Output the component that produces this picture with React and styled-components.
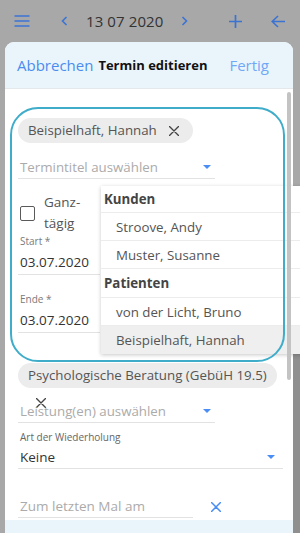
import React from 'react';
import styled, { createGlobalStyle } from 'styled-components';

const GlobalStyle = createGlobalStyle`
  html, body {
    margin: 0;
    height: 533px;
    overflow: hidden;
  }
  body {
    background:
      linear-gradient(#8f8f8f, #8f8f8f) right 353px / 7px 180px no-repeat,
      #a8a8a8;
    font-family: "Open Sans", "Liberation Sans", sans-serif;
  }
  * {
    box-sizing: border-box;
  }
`;

const BLUE = '#3b73d3';
const LINK = '#4b8cef';
const TEXT = 13.3;

const TopBar = styled.div`
  height: 42px;
  display: flex;
  align-items: center;
  padding: 0 15px 0 14px;
  color: ${BLUE};
`;

const IconButton = styled.span`
  display: flex;
  align-items: center;
  justify-content: center;
`;

const DateNav = styled.div`
  display: flex;
  align-items: center;
  margin-left: 31px;
  gap: 18px;
`;

const DateText = styled.span`
  font-size: 15px;
  color: #333;
  letter-spacing: 0.1px;
`;

const Actions = styled.div`
  display: flex;
  align-items: center;
  margin-left: auto;
  gap: 29px;
`;

const Modal = styled.div`
  position: relative;
  margin-left: 5px;
  width: 288px;
  height: 491px;
  background: #fff;
  border-radius: 9px 9px 0 0;
  display: flex;
  flex-direction: column;
`;

const ModalHeader = styled.div`
  height: 47px;
  flex-shrink: 0;
  display: flex;
  align-items: center;
  padding: 0 24px 0 12px;
  background: #eaf5fb;
  border-bottom: 1px solid #e4e8ea;
  border-radius: 9px 9px 0 0;
`;

const HeaderLink = styled.span`
  font-size: 15px;
  color: ${p => (p.$light ? '#70a7f6' : LINK)};
  margin-left: ${p => (p.$light ? 'auto' : '0')};
`;

const Title = styled.span`
  font-size: 13px;
  font-weight: 700;
  color: #111;
  margin-left: 5px;
`;

const ModalBody = styled.div`
  position: relative;
  flex: 1;
  padding: 18px 8px 0 5px;
`;

const Scrollbar = styled.div`
  position: absolute;
  right: 2px;
  top: 3px;
  width: 4px;
  height: 288px;
  border-radius: 2px;
  background: #c3c3c3;
  z-index: 5;
`;

const FocusGroup = styled.div`
  position: relative;
  width: 275px;
  height: 255px;
  padding: 11px 8px 0 8px;

  &::after {
    content: '';
    position: absolute;
    inset: 0;
    border: 2px solid #3fadca;
    border-radius: 28px;
    pointer-events: none;
    z-index: 3;
  }
`;

const Chip = styled.div`
  display: inline-flex;
  flex-wrap: wrap;
  align-items: center;
  height: 25px;
  padding: 0 10px;
  border-radius: 13px;
  background: #ececec;
  font-size: ${TEXT}px;
  color: #555;
  width: ${p => p.$width}px;
  margin-top: ${p => p.$mt || 0}px;
`;

const ChipLabel = styled.span`
  line-height: 25px;
  white-space: nowrap;
`;

const ChipClose = styled.span`
  display: flex;
  margin-left: ${p => p.$ml}px;
  margin-top: ${p => p.$mt || 0}px;
`;

const SelectField = styled.div`
  display: flex;
  align-items: center;
  width: ${p => p.$width}px;
  height: 23px;
  margin-top: ${p => p.$mt}px;
  padding: 0 4px 0 2px;
  border-bottom: 1px solid #e2e2e2;
  font-size: ${p => p.$size || TEXT}px;
  color: ${p => (p.$placeholder ? '#ababab' : '#333')};
`;

const FieldText = styled.span`
  flex: 1;
  white-space: nowrap;
`;

const Caret = styled.span`
  width: 0;
  height: 0;
  border-left: 4px solid transparent;
  border-right: 4px solid transparent;
  border-top: 4px solid #4a8ef5;
  margin-right: ${p => p.$mr || 0}px;
`;

const CheckRow = styled.div`
  display: flex;
  align-items: center;
  margin-top: 13px;
  padding-left: 2px;
`;

const CheckBox = styled.span`
  width: 15px;
  height: 15px;
  border: 1.5px solid #5a5a5a;
  border-radius: 2px;
  flex-shrink: 0;
`;

const CheckLabel = styled.span`
  width: 44px;
  margin-left: 9px;
  font-size: 13.5px;
  line-height: 21px;
  color: #555;
  hyphens: manual;
`;

const SmallLabel = styled.div`
  font-size: 10px;
  line-height: 14px;
  color: ${p => p.$color || '#7a7a7a'};
  padding-left: 2px;
  margin-top: ${p => p.$mt || 0}px;
`;

const DateValue = styled.div`
  width: 82px;
  height: 25px;
  margin-top: 2px;
  padding-left: 2px;
  font-size: 13.5px;
  line-height: 24px;
  color: #333;
  border-bottom: 1px solid #e2e2e2;
`;

const Popup = styled.div`
  position: absolute;
  left: 91px;
  top: 79px;
  width: 205px;
  background: #fff;
  box-shadow: 0 1px 4px rgba(0, 0, 0, 0.22);
  z-index: 2;
`;

const GroupHeader = styled.div`
  height: ${p => p.$h || 28}px;
  padding-left: 3px;
  display: flex;
  align-items: center;
  font-size: ${TEXT}px;
  font-weight: 700;
  color: #444;
  border-bottom: 1px solid #ececec;
`;

const Option = styled.div`
  height: 28px;
  padding-left: 15px;
  display: flex;
  align-items: center;
  font-size: ${TEXT}px;
  color: #555;
  background: ${p => (p.$active ? '#efefef' : '#fff')};
  border-bottom: ${p => (p.$last ? 'none' : '1px solid #ececec')};
`;

const Section = styled.div`
  padding-left: 8px;
  display: flex;
  flex-direction: column;
  align-items: flex-start;
`;

const ClearRow = styled.div`
  display: flex;
  align-items: center;
  margin-top: 26px;
`;

const ClearIcon = styled.span`
  display: flex;
  margin-left: 18px;
`;

const ModalFooter = styled.div`
  height: 13px;
  flex-shrink: 0;
  background: #eaf5fb;
`;

const XIcon = ({ size = 10, color = '#444', width = 1.4 }) => (
  <svg width={size} height={size} viewBox="0 0 10 10">
    <path d="M0.5 0.5 L9.5 9.5 M9.5 0.5 L0.5 9.5" stroke={color} strokeWidth={width} strokeLinecap="round" />
  </svg>
);

export default function App() {
  return (
    <>
      <GlobalStyle />
      <TopBar>
        <IconButton>
          <svg width="16" height="12" viewBox="0 0 16 12">
            <path d="M0.5 1 H15.5 M0.5 6 H15.5 M0.5 11 H15.5" stroke={BLUE} strokeWidth="1.6" />
          </svg>
        </IconButton>
        <DateNav>
          <svg width="7" height="10" viewBox="0 0 7 10">
            <path d="M5.5 1 L1.5 5 L5.5 9" stroke={BLUE} strokeWidth="1.6" fill="none" />
          </svg>
          <DateText>13 07 2020</DateText>
          <svg width="7" height="10" viewBox="0 0 7 10">
            <path d="M1.5 1 L5.5 5 L1.5 9" stroke={BLUE} strokeWidth="1.6" fill="none" />
          </svg>
        </DateNav>
        <Actions>
          <svg width="13" height="13" viewBox="0 0 13 13">
            <path d="M6.5 0 V13 M0 6.5 H13" stroke={BLUE} strokeWidth="1.7" />
          </svg>
          <svg width="14" height="13" viewBox="0 0 14 13">
            <path d="M14 6.5 H1.5 M7 1 L1.2 6.5 L7 12" stroke={BLUE} strokeWidth="1.6" fill="none" />
          </svg>
        </Actions>
      </TopBar>

      <Modal>
        <ModalHeader>
          <HeaderLink>Abbrechen</HeaderLink>
          <Title>Termin editieren</Title>
          <HeaderLink $light>Fertig</HeaderLink>
        </ModalHeader>

        <ModalBody>
          <Scrollbar />
          <FocusGroup>
            <Chip $width={175}>
              <ChipLabel>Beispielhaft, Hannah</ChipLabel>
              <ChipClose $ml={12}>
                <XIcon size={10} />
              </ChipClose>
            </Chip>
            <SelectField $width={197} $mt={13} $placeholder>
              <FieldText>Termintitel auswählen</FieldText>
              <Caret />
            </SelectField>

            <CheckRow>
              <CheckBox />
              <CheckLabel>Ganz{'\u00AD'}tägig</CheckLabel>
            </CheckRow>
            <SmallLabel>Start *</SmallLabel>
            <DateValue>03.07.2020</DateValue>
            <SmallLabel $mt={17}>Ende *</SmallLabel>
            <DateValue>03.07.2020</DateValue>

            <Popup>
              <GroupHeader $h={27}>Kunden</GroupHeader>
              <Option>Stroove, Andy</Option>
              <Option>Muster, Susanne</Option>
              <GroupHeader $h={29}>Patienten</GroupHeader>
              <Option>von der Licht, Bruno</Option>
              <Option $active $last>Beispielhaft, Hannah</Option>
            </Popup>
          </FocusGroup>

          <Section>
            <Chip $width={259} $mt={1}>
              <ChipLabel>Psychologische Beratung (GebüH 19.5)</ChipLabel>
              <ChipClose $ml={8} $mt={10}>
                <XIcon size={10} />
              </ChipClose>
            </Chip>
            <SelectField $width={197} $mt={12} $placeholder>
              <FieldText>Leistung(en) auswählen</FieldText>
              <Caret />
            </SelectField>
            <SmallLabel $mt={7} $color="#666">Art der Wiederholung</SmallLabel>
            <SelectField $width={265} $mt={2} $size={13.5}>
              <FieldText>Keine</FieldText>
              <Caret $mr={4} />
            </SelectField>
            <ClearRow>
              <SelectField $width={175} $mt={0} $size={13.5} $placeholder>
                <FieldText>Zum letzten Mal am</FieldText>
              </SelectField>
              <ClearIcon>
                <XIcon size={10} color="#4a8ef5" width={1.5} />
              </ClearIcon>
            </ClearRow>
          </Section>
        </ModalBody>

        <ModalFooter />
      </Modal>
    </>
  );
}
